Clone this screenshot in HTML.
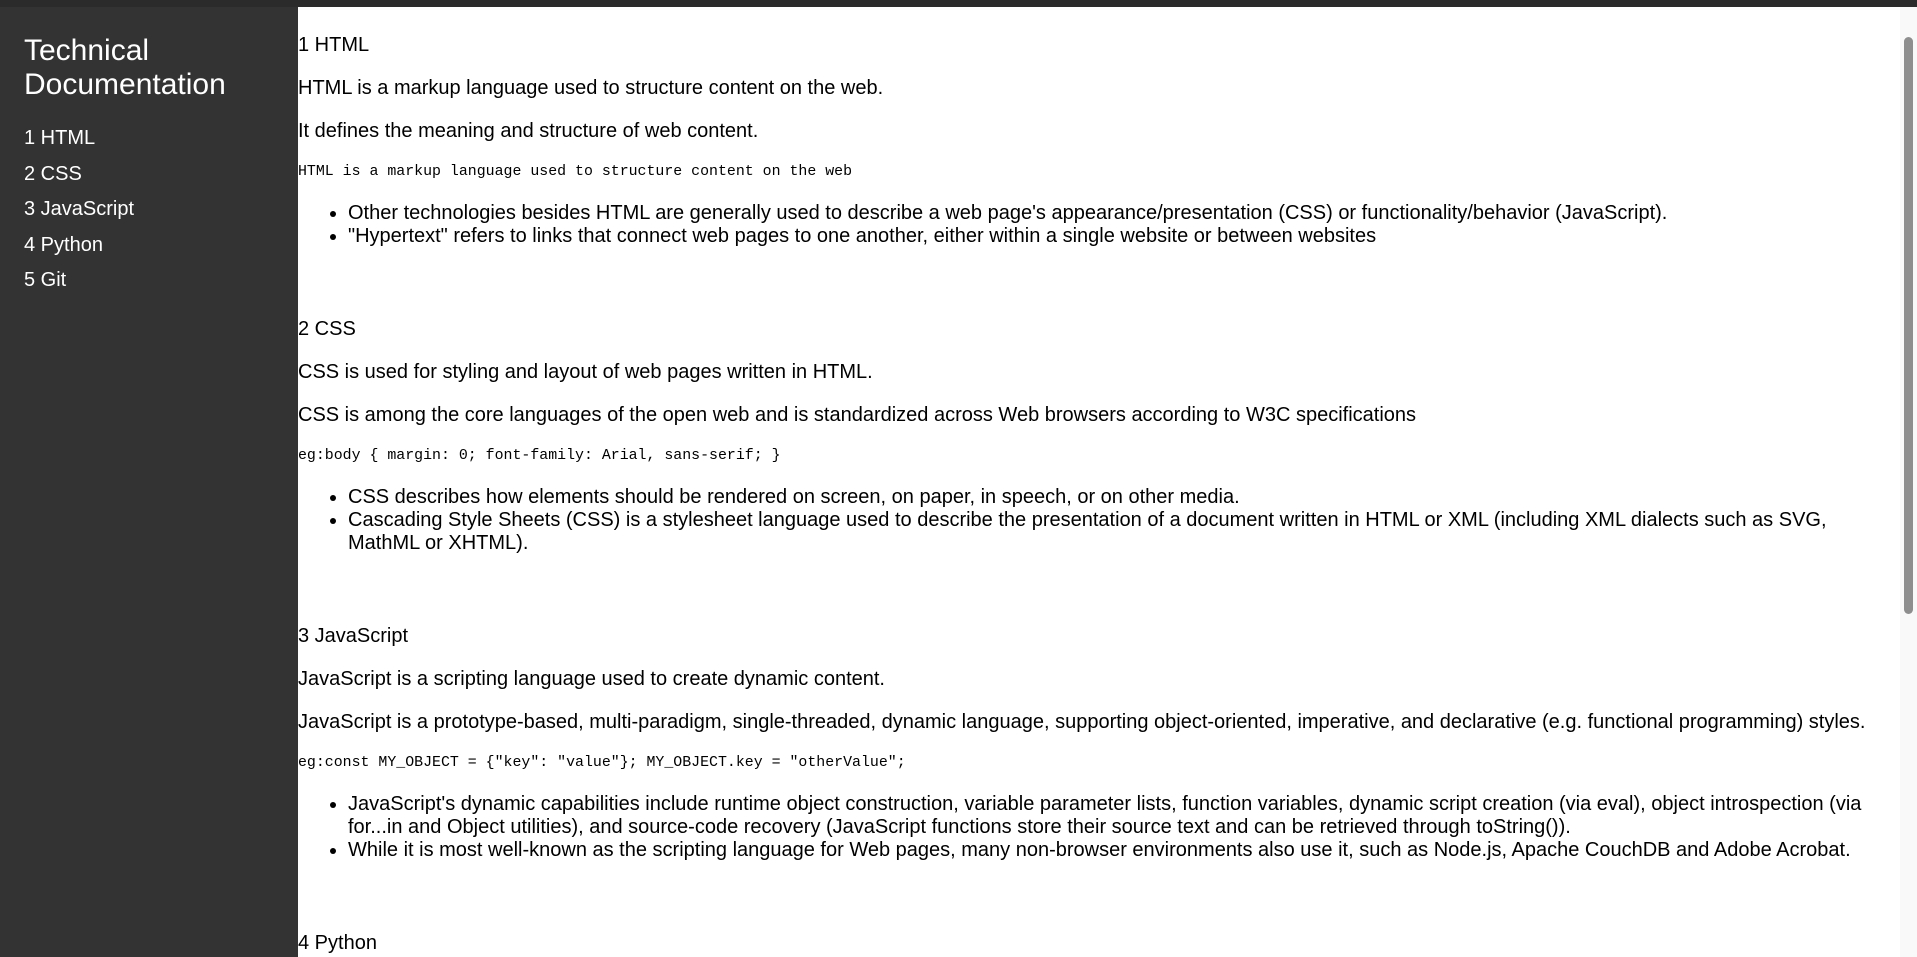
<!DOCTYPE html>
<html><head><meta charset="utf-8"><style>
html,body{margin:0;padding:0;width:1917px;height:957px;overflow:hidden;background:#fff;font-family:"Liberation Sans",Arial,sans-serif;}
#top{position:absolute;left:0;top:0;width:1917px;height:7px;background:#2b2b2b;}
#nav{position:absolute;left:0;top:7px;width:298px;height:950px;background:#333;color:#fff;}
#nav h1{font-weight:normal;font-size:30px;line-height:34px;margin:0;position:absolute;left:24px;top:27px;}
#nav a{position:absolute;left:24px;color:#fff;text-decoration:none;font-size:20px;line-height:23px;}
#main{position:absolute;left:298px;top:7px;width:1600px;height:950px;overflow:hidden;color:#000;}
.sec{margin:0 0 70px 0;}
.h{font-size:20px;line-height:23px;margin:0 0 20px 0;}
p{font-size:20px;line-height:23px;margin:0 0 20px 0;}
code{display:block;font-family:"Liberation Mono",monospace;font-size:14.9px;line-height:19px;margin:0 0 20px 0;white-space:pre;}
ul{margin:0 0 20px 0;padding-left:50px;font-size:20px;line-height:23px;}
#sb{position:absolute;left:1900px;top:7px;width:17px;height:950px;background:#f9f9f9;}
#thumb{position:absolute;left:4px;top:30px;width:9px;height:577px;background:#8e8e8e;border-radius:5px;}
</style></head><body>
<div id="top"></div>
<div id="nav">
<h1>Technical<br>Documentation</h1>
<a style="top:120px">1 HTML</a>
<a style="top:156px">2 CSS</a>
<a style="top:191px">3 JavaScript</a>
<a style="top:227px">4 Python</a>
<a style="top:262px">5 Git</a>
</div>
<div id="main"><div style="height:27px"></div>
<div class="sec"><div class="h">1 HTML</div>
<p>HTML is a markup language used to structure content on the web.</p>
<p>It defines the meaning and structure of web content.</p>
<code>HTML is a markup language used to structure content on the web</code>
<ul><li>Other technologies besides HTML are generally used to describe a web page's appearance/presentation (CSS) or functionality/behavior (JavaScript).</li>
<li>"Hypertext" refers to links that connect web pages to one another, either within a single website or between websites</li></ul></div>
<div class="sec"><div class="h">2 CSS</div>
<p>CSS is used for styling and layout of web pages written in HTML.</p>
<p>CSS is among the core languages of the open web and is standardized across Web browsers according to W3C specifications</p>
<code>eg:body { margin: 0; font-family: Arial, sans-serif; }</code>
<ul style="width:1540px"><li>CSS describes how elements should be rendered on screen, on paper, in speech, or on other media.</li>
<li>Cascading Style Sheets (CSS) is a stylesheet language used to describe the presentation of a document written in HTML or XML (including XML dialects such as SVG, MathML or XHTML).</li></ul></div>
<div class="sec"><div class="h">3 JavaScript</div>
<p>JavaScript is a scripting language used to create dynamic content.</p>
<p>JavaScript is a prototype-based, multi-paradigm, single-threaded, dynamic language, supporting object-oriented, imperative, and declarative (e.g. functional programming) styles.</p>
<code>eg:const MY_OBJECT = {"key": "value"}; MY_OBJECT.key = "otherValue";</code>
<ul style="width:1560px"><li>JavaScript's dynamic capabilities include runtime object construction, variable parameter lists, function variables, dynamic script creation (via eval), object introspection (via for...in and Object utilities), and source-code recovery (JavaScript functions store their source text and can be retrieved through toString()).</li>
<li>While it is most well-known as the scripting language for Web pages, many non-browser environments also use it, such as Node.js, Apache CouchDB and Adobe Acrobat.</li></ul></div>
<div class="sec"><div class="h">4 Python</div>
<p>Python is a programming language.</p></div>
</div>
<div id="sb"><div id="thumb"></div></div>
</body></html>
